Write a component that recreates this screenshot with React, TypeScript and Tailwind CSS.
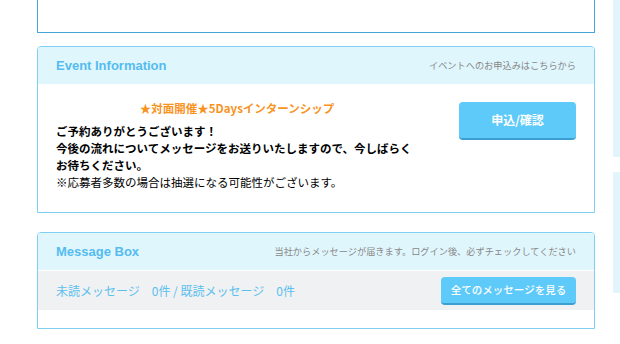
const jp = '"Noto Sans CJK JP", "Liberation Sans", sans-serif'
const en = '"Liberation Sans", "Noto Sans CJK JP", sans-serif'

export default function App() {
  return (
    <div className="w-[620px] h-[344px] overflow-hidden bg-white flex" style={{ fontFamily: jp }}>
      <div className="ml-[37px] w-[558px] shrink-0 flex flex-col">
        <div className="h-[33px] border-x border-b border-[#45a5d6]" />

        <section className="mt-[13px] h-[167px] border border-[#7dd0f2] rounded-t-[4px] flex flex-col">
          <header className="h-[37px] bg-[#e0f6fd] rounded-t-[3px] flex items-center justify-between px-[18px]">
            <h2 className="text-[13px] font-bold text-[#55bcef]" style={{ fontFamily: en }}>
              Event Information
            </h2>
            <span className="text-[9.2px] text-[#888]">イベントへのお申込みはこちらから</span>
          </header>
          <div className="flex items-start px-[18px] pt-[16px]">
            <div className="w-[362px] text-[11.5px] leading-[17px] text-black">
              <p className="text-center font-bold text-[#f7931e] mb-[6px]">★対面開催★5Daysインターンシップ</p>
              <p className="font-bold">ご予約ありがとうございます！</p>
              <p className="font-bold">今後の流れについてメッセージをお送りいたしますので、今しばらくお待ちください。</p>
              <p>※応募者多数の場合は抽選になる可能性がございます。</p>
            </div>
            <button className="ml-auto mt-[2px] w-[117px] h-[38px] bg-[#5ecaf9] border-b-2 border-[#3b9fcf] rounded-[4px] text-white text-[12px] font-bold">
              申込/確認
            </button>
          </div>
        </section>

        <section className="mt-[19px] h-[97px] border border-[#7dd0f2] rounded-t-[4px] flex flex-col">
          <header className="h-[38px] bg-[#e0f6fd] rounded-t-[3px] border-b border-white flex items-center justify-between px-[18px]">
            <h2 className="text-[13px] font-bold text-[#55bcef]" style={{ fontFamily: en }}>
              Message Box
            </h2>
            <span className="text-[9.2px] text-[#888]">当社からメッセージが届きます。ログイン後、必ずチェックしてください</span>
          </header>
          <div className="h-[39px] bg-[#f0f1f3] flex items-center justify-between px-[18px]">
            <span className="text-[12px] text-[#5bbfef]">未読メッセージ　0件 / 既読メッセージ　0件</span>
            <button className="w-[135px] h-[28px] bg-[#5ecaf9] border-b-2 border-[#3b9fcf] rounded-[4px] text-white text-[10.5px] font-medium">
              全てのメッセージを見る
            </button>
          </div>
        </section>
      </div>

      <aside className="ml-[18px] w-[200px] shrink-0 flex flex-col">
        <div className="h-[157px] bg-[#e3f5fc]" />
        <div className="mt-[15px] h-[121px] bg-[#e3f5fc]" />
      </aside>
    </div>
  )
}
